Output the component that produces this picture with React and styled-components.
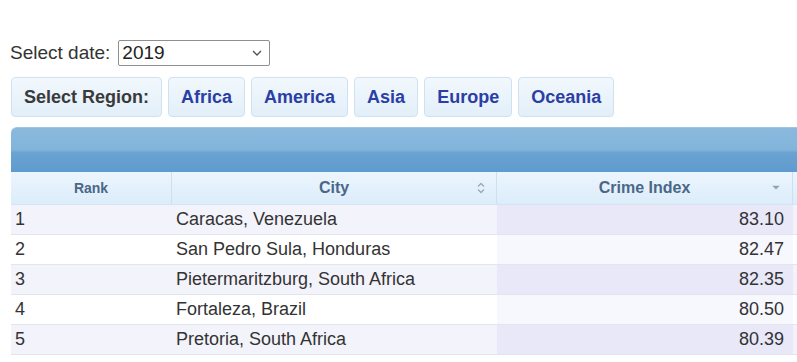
import React from "react";
import styled, { createGlobalStyle } from "styled-components";

const GlobalStyle = createGlobalStyle`
  body {
    margin: 0;
    background: #fff;
    overflow: hidden;
    font-family: "Liberation Sans", Arial, sans-serif;
  }
`;

const Page = styled.div`
  padding: 40px 0 0 11px;
  width: 1000px;
`;

const DateRow = styled.div`
  display: flex;
  align-items: center;
  height: 26px;
  font-size: 19px;
  color: #333;
  margin-left: -1px;
`;

const DateSelect = styled.div`
  display: flex;
  align-items: center;
  justify-content: space-between;
  box-sizing: border-box;
  margin-left: 8px;
  width: 152px;
  height: 26px;
  padding: 0 7px 0 3px;
  border: 1px solid #8f8f8f;
  border-radius: 2px;
  color: #222;
  font-size: 19px;
`;

const RegionBar = styled.div`
  display: flex;
  gap: 6px;
  margin-top: 11px;
`;

const RegionButton = styled.div`
  display: flex;
  align-items: center;
  box-sizing: border-box;
  height: 40px;
  padding: 0 12px;
  border: 1px solid #cfe2f2;
  border-radius: 4px;
  background: linear-gradient(#f2f8fd, #e2eff9);
  font-size: 18px;
  font-weight: bold;
  color: ${(p) => (p.$label ? "#3a3a3a" : "#2b3ea5")};
`;

const Table = styled.div`
  margin-top: 10px;
  width: 900px;
`;

const Caption = styled.div`
  height: 45px;
  border-radius: 6px 0 0 0;
  border-top: 1px solid #9ec5e4;
  box-sizing: border-box;
  background: linear-gradient(
    to bottom,
    #8ab9dd 0%,
    #82b4da 50%,
    #6aa3d2 56%,
    #5f9bce 100%
  );
`;

const Row = styled.div`
  display: grid;
  grid-template-columns: 161px 325px 296px 1fr;
  height: ${(p) => p.$h || 30}px;
  border-bottom: 1px solid #e4e4ec;
  box-sizing: border-box;
`;

const HeadRow = styled(Row)`
  border-bottom: 1px solid #d5e4f0;
  background: linear-gradient(#ebf5fd 0%, #e4f1fc 50%, #dcecfa 100%);
`;

const HeadCell = styled.div`
  display: flex;
  align-items: center;
  justify-content: center;
  position: relative;
  border-right: 1px solid #cde0f0;
  font-size: ${(p) => p.$size || 16}px;
  font-weight: bold;
  color: #4a6788;
`;

const SortIcon = styled.span`
  position: absolute;
  right: ${(p) => p.$right}px;
  top: 50%;
  transform: translateY(-50%);
  display: flex;
`;

const Cell = styled.div`
  display: flex;
  align-items: center;
  justify-content: ${(p) => (p.$num ? "flex-end" : "flex-start")};
  padding: ${(p) => (p.$num ? "0 9px 0 0" : "0 0 0 4px")};
  font-size: 18px;
  color: #333;
  background: ${(p) =>
    p.$num ? (p.$odd ? "#e8e8f9" : "#f7f7fe") : p.$odd ? "#f3f3fb" : "#fff"};
`;

const rows = [
  [1, "Caracas, Venezuela", "83.10"],
  [2, "San Pedro Sula, Honduras", "82.47"],
  [3, "Pietermaritzburg, South Africa", "82.35"],
  [4, "Fortaleza, Brazil", "80.50"],
  [5, "Pretoria, South Africa", "80.39"],
];

const regions = ["Africa", "America", "Asia", "Europe", "Oceania"];

const Chevron = () => (
  <svg width="10" height="6" viewBox="0 0 10 6">
    <path d="M1 1l4 4 4-4" fill="none" stroke="#555" strokeWidth="1.4" />
  </svg>
);

const BothSort = () => (
  <svg width="8" height="11" viewBox="0 0 8 11">
    <path d="M1 4l3-3 3 3M1 7l3 3 3-3" fill="none" stroke="#9aa8b8" strokeWidth="1.3" />
  </svg>
);

const DownSort = () => (
  <svg width="8" height="5" viewBox="0 0 8 5">
    <path d="M0 0h8L4 4z" fill="#8fa3bb" />
  </svg>
);

export default function App() {
  return (
    <>
      <GlobalStyle />
      <Page>
        <DateRow>
          Select date:
          <DateSelect>
            2019
            <Chevron />
          </DateSelect>
        </DateRow>
        <RegionBar>
          <RegionButton $label>Select Region:</RegionButton>
          {regions.map((r) => (
            <RegionButton key={r}>{r}</RegionButton>
          ))}
        </RegionBar>
        <Table>
          <Caption />
          <HeadRow $h={33}>
            <HeadCell $size={14}>Rank</HeadCell>
            <HeadCell>
              City
              <SortIcon $right={11}>
                <BothSort />
              </SortIcon>
            </HeadCell>
            <HeadCell>
              Crime Index
              <SortIcon $right={12}>
                <DownSort />
              </SortIcon>
            </HeadCell>
            <HeadCell />
          </HeadRow>
          {rows.map(([rank, city, idx], i) => (
            <Row key={rank}>
              <Cell $odd={i % 2 === 0}>{rank}</Cell>
              <Cell $odd={i % 2 === 0}>{city}</Cell>
              <Cell $num $odd={i % 2 === 0}>
                {idx}
              </Cell>
              <Cell $odd={i % 2 === 0} />
            </Row>
          ))}
        </Table>
      </Page>
    </>
  );
}
